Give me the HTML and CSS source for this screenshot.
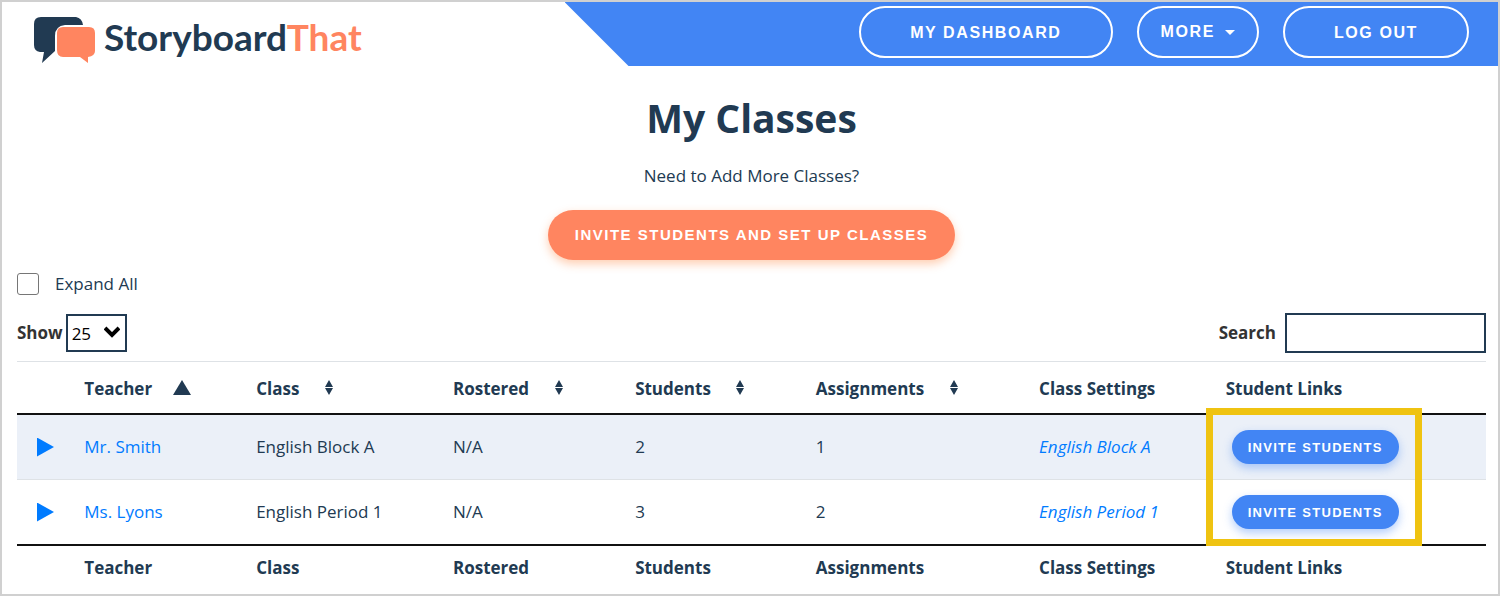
FILE: index.html
```html
<!DOCTYPE html>
<html lang="en">
<head>
    <meta charset="UTF-8">
    <title>My Classes - StoryboardThat</title>
    <link rel="stylesheet" href="styles.css">
</head>
<body>
    <header class="site-header">
        <a class="logo" href="#">
            <svg class="logo-mark" width="62" height="47" viewBox="0 0 62 47" aria-hidden="true">
                <path fill="#213a52" d="M7 0H42Q48 1 49 8H31Q21 9 21 19V34L8 46L10 35H6Q0 34 0 28V7Q0 0 7 0Z"/>
                <path fill="#ff8560" d="M29 10H55Q61 10 61 16V34Q61 39 54 40V46L46 40H29Q23 40 23 33V16Q23 10 29 10Z"/>
            </svg>
            <span class="logo-text">Storyboard<span class="logo-that">That</span></span>
        </a>
        <nav class="site-nav">
            <a class="nav-button nav-wide" href="#">My Dashboard</a>
            <button class="nav-button nav-more" type="button">More <span class="caret"></span></button>
            <a class="nav-button nav-wide" href="#">Log Out</a>
        </nav>
    </header>

    <main>
        <!-- Title and main action -->
        <section class="intro">
            <h1>My Classes</h1>
            <p>Need to Add More Classes?</p>
            <button class="btn btn-primary" type="button">Invite Students and Set Up Classes</button>
        </section>

        <div class="expand-all">
            <input type="checkbox" id="expand-all">
            <label for="expand-all">Expand All</label>
        </div>

        <!-- Table controls -->
        <div class="table-controls">
            <div class="control">
                <label for="page-size">Show</label>
                <span class="select-wrap">
                    <select id="page-size">
                        <option>10</option>
                        <option selected>25</option>
                        <option>50</option>
                    </select>
                    <svg class="chevron" width="16" height="12" viewBox="0 0 16 12" aria-hidden="true"><path d="M1 2L8 9L15 2" fill="none" stroke="#000" stroke-width="4"/></svg>
                </span>
            </div>
            <div class="control search">
                <label for="search">Search</label>
                <input type="text" id="search">
            </div>
        </div>

        <table class="classes">
            <colgroup>
                <col class="col-toggle">
                <col class="col-teacher">
                <col class="col-class">
                <col class="col-rostered">
                <col class="col-students">
                <col class="col-assignments">
                <col class="col-settings">
                <col>
            </colgroup>
            <thead>
                <tr>
                    <th></th>
                    <th>Teacher <svg class="sort-asc" width="18" height="15" viewBox="0 0 18 15"><path d="M9 0L18 15H0Z"/></svg></th>
                    <th>Class <svg class="sort" width="10" height="15" viewBox="0 0 10 15"><path d="M5 0L9 7H1ZM1 8H9L5 15Z"/></svg></th>
                    <th>Rostered <svg class="sort" width="10" height="15" viewBox="0 0 10 15"><path d="M5 0L9 7H1ZM1 8H9L5 15Z"/></svg></th>
                    <th>Students <svg class="sort" width="10" height="15" viewBox="0 0 10 15"><path d="M5 0L9 7H1ZM1 8H9L5 15Z"/></svg></th>
                    <th>Assignments <svg class="sort" width="10" height="15" viewBox="0 0 10 15"><path d="M5 0L9 7H1ZM1 8H9L5 15Z"/></svg></th>
                    <th>Class Settings</th>
                    <th>Student Links</th>
                </tr>
            </thead>
            <tbody>
                <tr>
                    <td><button class="toggle" type="button" aria-label="Expand Mr. Smith"></button></td>
                    <td><a href="#">Mr. Smith</a></td>
                    <td>English Block A</td>
                    <td>N/A</td>
                    <td>2</td>
                    <td>1</td>
                    <td><a class="settings" href="#">English Block A</a></td>
                    <td class="links">
                        <button class="btn btn-invite" type="button">Invite Students</button>
                        <div class="highlight"></div>
                    </td>
                </tr>
                <tr>
                    <td><button class="toggle" type="button" aria-label="Expand Ms. Lyons"></button></td>
                    <td><a href="#">Ms. Lyons</a></td>
                    <td>English Period 1</td>
                    <td>N/A</td>
                    <td>3</td>
                    <td>2</td>
                    <td><a class="settings" href="#">English Period 1</a></td>
                    <td><button class="btn btn-invite" type="button">Invite Students</button></td>
                </tr>
            </tbody>
            <tfoot>
                <tr>
                    <th></th>
                    <th>Teacher</th>
                    <th>Class</th>
                    <th>Rostered</th>
                    <th>Students</th>
                    <th>Assignments</th>
                    <th>Class Settings</th>
                    <th>Student Links</th>
                </tr>
            </tfoot>
        </table>
    </main>
</body>
</html>
```

FILE: styles.css
```css
* {
    box-sizing: border-box;
}
body {
    margin: 0;
    min-height: 100vh;
    border: 2px solid #d0d0d0;
    background-color: #fff;
    color: #213a52;
    font-family: "Open Sans", sans-serif;
    font-size: 17px;
    line-height: 26px;
}
a {
    color: #007bff;
    text-decoration: none;
}
button {
    cursor: pointer;
}
/* Header */
.site-header {
    display: flex;
    justify-content: space-between;
    height: 64px;
}
.logo {
    display: flex;
    align-items: center;
    gap: 8px;
    padding: 12px 0 0 32px;
    color: #213a52;
}
.logo-text {
    font-family: Lato, sans-serif;
    font-size: 37px;
    font-weight: bold;
    line-height: 44px;
    padding-bottom: 6px;
}
.logo-that {
    color: #ff8560;
}
.site-nav {
    display: flex;
    justify-content: flex-end;
    gap: 24px;
    width: 62.4%;
    padding: 4px 29px 8px 0;
    background-color: #4285f4;
    clip-path: polygon(0 0, 100% 0, 100% 100%, 64px 100%);
}
.nav-button {
    display: flex;
    align-items: center;
    padding: 0 22px;
    border: 2px solid #fff;
    border-radius: 26px;
    background-color: transparent;
    color: #fff;
    font-family: "Liberation Sans", Arial, sans-serif;
    font-size: 16px;
    font-weight: bold;
    letter-spacing: 0.1em;
    text-transform: uppercase;
}
.nav-wide {
    padding: 2px 49px 0;
}
.caret {
    margin-left: 10px;
    border: 5px solid transparent;
    border-top-color: #fff;
    border-bottom: 0;
}
/* Page content */
main {
    padding: 24px 12px 0 15px;
}
.intro {
    text-align: center;
}
h1 {
    margin: 0 0 17px;
    font-size: 39px;
    line-height: 56px;
}
.intro p {
    margin: 0 0 21px;
}
.btn {
    display: block;
    border: 0;
    color: #fff;
    font-family: "Liberation Sans", Arial, sans-serif;
    font-weight: bold;
    letter-spacing: 0.1em;
    text-transform: uppercase;
}
.btn-primary {
    height: 50px;
    margin: 0 auto;
    padding: 0 27px 2px;
    border-radius: 25px;
    background-color: #ff8560;
    box-shadow: 0 4px 10px rgba(255, 133, 60, 0.4);
    font-size: 15px;
}
.btn-invite {
    height: 34px;
    margin-left: 6px;
    padding: 0 16px;
    border-radius: 17px;
    background-color: #4285f4;
    box-shadow: 0 4px 10px rgba(66, 133, 244, 0.4);
    font-size: 13px;
}
.expand-all {
    display: flex;
    align-items: center;
    gap: 16px;
    margin-top: 11px;
}
.expand-all input {
    appearance: none;
    width: 22px;
    height: 22px;
    margin: 0;
    border: 1px solid #767676;
    border-radius: 3px;
    background-color: #fff;
}
.expand-all input:checked {
    background-color: #4285f4;
}
/* Page size and search */
.table-controls {
    display: flex;
    justify-content: space-between;
    margin: 16px 0 8px;
}
.control {
    display: flex;
    align-items: center;
    gap: 3px;
    height: 40px;
    color: #333;
    font-weight: bold;
}
.search {
    gap: 9px;
}
.control select,
.control input {
    border: 2px solid #213a52;
    border-radius: 0;
    background-color: #fff;
    color: #000;
    font-family: inherit;
    font-size: 17px;
}
.select-wrap {
    position: relative;
}
.control select {
    appearance: none;
    display: block;
    width: 61px;
    height: 38px;
    padding: 0 4px;
}
.chevron {
    position: absolute;
    top: 12px;
    right: 7px;
    pointer-events: none;
}
.control input {
    width: 201px;
    height: 40px;
    padding: 0 8px;
}
/* Classes table */
.classes {
    width: 100%;
    table-layout: fixed;
    border-spacing: 0;
    border-top: 1px solid #dee2e6;
}
.col-toggle { width: 3.9%; }
.col-teacher { width: 11.7%; }
.col-class { width: 13.4%; }
.col-rostered { width: 12.4%; }
.col-students { width: 12.3%; }
.col-assignments { width: 15.2%; }
.col-settings { width: 12.7%; }
.classes th,
.classes td {
    padding: 0 0 0 10px;
    text-align: left;
    white-space: nowrap;
}
.classes thead th {
    height: 53px;
    padding-top: 2px;
    border-bottom: 2px solid #111;
}
.classes th svg {
    fill: #213a52;
}
.sort {
    margin-left: 20px;
}
.sort-asc {
    margin-left: 16px;
}
.classes td {
    height: 64px;
}
.classes tbody tr:nth-child(odd) {
    background-color: #ebf0f8;
}
.classes tbody tr:first-child td {
    height: 65px;
    border-bottom: 1px solid #dee2e6;
}
.classes tfoot th {
    height: 45px;
    border-top: 2px solid #111;
}
.toggle {
    display: block;
    width: 17px;
    height: 19px;
    margin-left: 10px;
    padding: 0;
    border: 0;
    background-color: #007bff;
    clip-path: polygon(0 0, 100% 50%, 0 100%);
}
.settings {
    font-style: italic;
}
/* Frame drawn over the invite buttons */
.links {
    position: relative;
}
.highlight {
    position: absolute;
    top: -7px;
    left: -10px;
    width: 216px;
    height: 138px;
    border: 7px solid #efc311;
    pointer-events: none;
}
```
